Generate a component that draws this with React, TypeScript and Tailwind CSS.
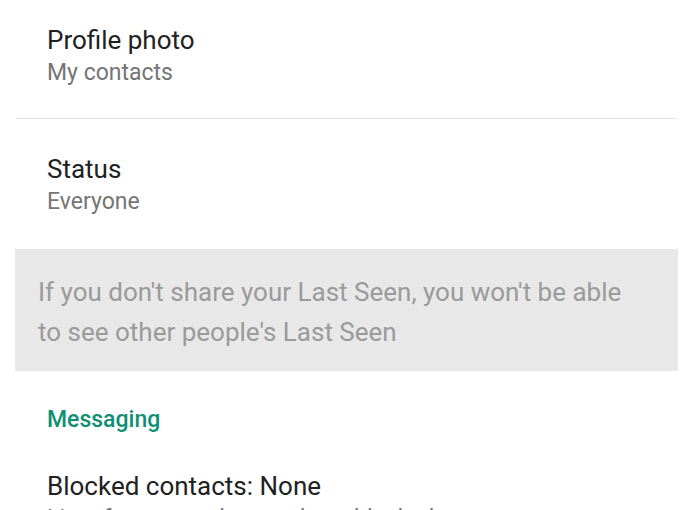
import React from "react";

const rowTitle = "text-[26px] leading-[32px] text-[#212121]";
const rowSub = "mt-[2px] text-[23px] leading-[30px] text-[#757575]";

export default function App() {
  return (
    <div
      className="w-[693px] h-[510px] overflow-hidden bg-white"
      style={{ fontFamily: "Roboto, 'Noto Sans', sans-serif" }}
    >
      {/* Profile photo */}
      <div className="h-[118px] pl-[47px] pt-[24px]">
        <div className={rowTitle}>Profile photo</div>
        <div className={rowSub}>My contacts</div>
      </div>
      <div className="mx-[16px] h-px bg-[#e3e3e3]"></div>

      {/* Status */}
      <div className="h-[130px] pl-[47px] pt-[34px]">
        <div className={rowTitle}>Status</div>
        <div className={rowSub}>Everyone</div>
      </div>

      {/* Footnote */}
      <div className="mx-[15px] h-[122px] bg-[#e8e8e8] pl-[23px] pt-[23px]">
        <p className="w-[605px] text-[26px] leading-[40px] text-[#9a9a9a]">
          If you don't share your Last Seen, you won't be able to see other
          people's Last Seen
        </p>
      </div>

      {/* Messaging section */}
      <div className="pl-[47px] pt-[34px]">
        <div className="text-[23px] leading-[30px] font-medium text-[#0f8f74]">
          Messaging
        </div>
      </div>
      <div className="pl-[47px] pt-[35px]">
        <div className={rowTitle}>Blocked contacts: None</div>
        <div className={rowSub}>List of contacts that you have blocked.</div>
      </div>
    </div>
  );
}
